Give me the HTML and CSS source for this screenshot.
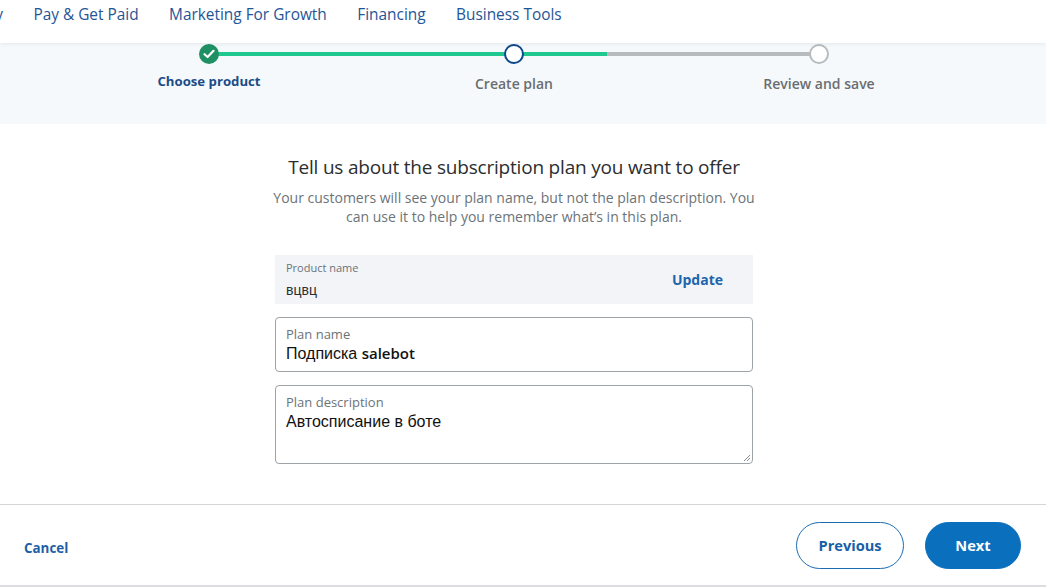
FILE: index.html
```html
<!DOCTYPE html>
<html lang="en">
<head>
<meta charset="utf-8">
<title>Create plan</title>
<link rel="stylesheet" href="styles.css">
</head>
<body>
<header class="nav">
  <a class="nav-link nav-cut" href="#">Money</a>
  <a class="nav-link" href="#">Pay &amp; Get Paid</a>
  <a class="nav-link" href="#">Marketing For Growth</a>
  <a class="nav-link" href="#">Financing</a>
  <a class="nav-link" href="#">Business Tools</a>
</header>

<section class="stepper-band">
  <div class="stepper">
    <div class="track"><div class="track-fill"></div></div>
    <div class="step step-done">
      <span class="dot dot-done">
        <svg width="12" height="10" viewBox="0 0 12 10"><path d="M1.5 5.2 L4.6 8 L10.5 1.8" fill="none" stroke="#fff" stroke-width="2.2" stroke-linecap="round" stroke-linejoin="round"/></svg>
      </span>
      <span class="step-label label-done">Choose product</span>
    </div>
    <div class="step">
      <span class="dot dot-current"></span>
      <span class="step-label">Create plan</span>
    </div>
    <div class="step">
      <span class="dot dot-todo"></span>
      <span class="step-label">Review and save</span>
    </div>
  </div>
</section>

<main class="content">
  <h1 class="title">Tell us about the subscription plan you want to offer</h1>
  <p class="subtitle">Your customers will see your plan name, but not the plan description. You can use it to help you remember what’s in this plan.</p>

  <div class="form">
    <div class="product-box">
      <div class="product-text">
        <div class="product-label">Product name</div>
        <div class="product-value">вцвц</div>
      </div>
      <a class="update" href="#">Update</a>
    </div>

    <label class="field">
      <span class="field-label">Plan name</span>
      <span class="field-value">Подписка <b class="latin">salebot</b></span>
    </label>

    <label class="field field-area">
      <span class="field-label">Plan description</span>
      <span class="field-value">Автосписание в боте</span>
      <svg class="grip" width="9" height="9" viewBox="0 0 9 9"><path d="M8 2 L2 8 M8 5 L5 8" stroke="#888" stroke-width="1"/></svg>
    </label>
  </div>
</main>

<footer class="footer">
  <a class="cancel" href="#">Cancel</a>
  <div class="buttons">
    <button class="btn btn-secondary">Previous</button>
    <button class="btn btn-primary">Next</button>
  </div>
</footer>
</body>
</html>
```

FILE: styles.css
```css
* { box-sizing: border-box; }

body {
  margin: 0;
  background: #fff;
  font-family: "Open Sans", "Noto Sans", sans-serif;
  color: #2c2e2f;
  height: 588px;
  overflow: hidden;
}

a { text-decoration: none; }

.nav {
  height: 43px;
  display: flex;
  align-items: flex-start;
  gap: 30.5px;
  padding-top: 3px;
  background: #fff;
  position: relative;
  z-index: 2;
  box-shadow: 0 1px 4px rgba(0, 0, 0, 0.07);
}

.nav-link {
  font-size: 15.4px;
  line-height: 24px;
  color: #1f5596;
  white-space: nowrap;
}

.nav-cut {
  margin-left: -46px;
}

.stepper-band {
  height: 81px;
  background: #f5f9fc;
  padding-right: 18px;
  display: flex;
  justify-content: center;
}

.stepper {
  position: relative;
  display: grid;
  grid-template-columns: repeat(3, 305px);
  padding-top: 1px;
}

.track {
  position: absolute;
  top: 9px;
  left: 152px;
  right: 152px;
  height: 4px;
  background: #b7bbbe;
}

.track-fill {
  width: 65.3%;
  height: 100%;
  background: #1ec88f;
}

.step {
  position: relative;
  display: flex;
  flex-direction: column;
  align-items: center;
}

.dot {
  width: 20px;
  height: 20px;
  border-radius: 50%;
  display: flex;
  align-items: center;
  justify-content: center;
  background: #fff;
}

.dot-done {
  background: #1f9064;
}

.dot-current {
  border: 2px solid #0d4a8c;
}

.dot-todo {
  border: 2px solid #b7bcbf;
}

.step-label {
  margin-top: 11px;
  font-size: 14px;
  line-height: 18px;
  font-weight: 600;
  color: #6a6d70;
}

.label-done {
  margin-top: 8px;
  font-size: 13.2px;
  font-weight: 700;
  color: #1b4c86;
}

.content {
  padding-right: 18px;
  display: flex;
  flex-direction: column;
  align-items: center;
}

.title {
  margin: 29px 0 0;
  font-size: 19px;
  letter-spacing: -0.2px;
  line-height: 28px;
  font-weight: 400;
  color: #2c2e2f;
  text-align: center;
}

.subtitle {
  margin: 7px 0 0;
  width: 484px;
  font-size: 14px;
  line-height: 19px;
  color: #6c7378;
  text-align: center;
}

.form {
  width: 478px;
  margin-top: 29px;
  display: flex;
  flex-direction: column;
  gap: 13px;
}

.product-box {
  height: 49px;
  background: #f2f4f7;
  display: flex;
  align-items: center;
  justify-content: space-between;
  padding: 0 30px 0 11px;
}

.product-label {
  font-size: 11px;
  line-height: 14px;
  color: #6c7378;
  margin-top: 0;
}

.product-value {
  font-family: "Liberation Sans", Arial, sans-serif;
  font-size: 14px;
  line-height: 18px;
  color: #2c2e2f;
  margin-top: 6px;
}

.update {
  font-size: 14px;
  font-weight: 700;
  color: #1e64ad;
  margin-top: -1px;
}

.field {
  display: flex;
  flex-direction: column;
  height: 55px;
  border: 1px solid #9da3a6;
  border-radius: 4px;
  padding: 8px 10px 0;
  position: relative;
}

.field-area {
  height: 79px;
}

.field-label {
  font-size: 13px;
  line-height: 17px;
  color: #6c7378;
}

.field-value {
  font-family: "Liberation Sans", Arial, sans-serif;
  font-size: 16px;
  line-height: 21px;
  color: #111;
}

.latin {
  font-family: "Open Sans", sans-serif;
  font-weight: 600;
  font-size: 15px;
}

.grip {
  position: absolute;
  right: 1px;
  bottom: 1px;
}

.footer {
  margin-top: 40px;
  height: 83px;
  border-top: 1px solid #d3d5d7;
  border-bottom: 2px solid #dcdde0;
  display: flex;
  align-items: center;
  justify-content: space-between;
  padding: 0 25px 0 24px;
}

.cancel {
  font-size: 13.4px;
  font-weight: 700;
  color: #1f5fa6;
  margin-top: 5px;
}

.buttons {
  display: flex;
  gap: 21px;
}

.btn {
  height: 47px;
  border-radius: 24px;
  font-family: "Open Sans", sans-serif;
  font-size: 14.6px;
  font-weight: 700;
  cursor: pointer;
}

.btn-secondary {
  width: 108px;
  background: #fff;
  border: 1px solid #1b6bb3;
  color: #1860a6;
}

.btn-primary {
  width: 96px;
  background: #0a6fbd;
  border: 1px solid #0a6fbd;
  color: #fff;
}
```
